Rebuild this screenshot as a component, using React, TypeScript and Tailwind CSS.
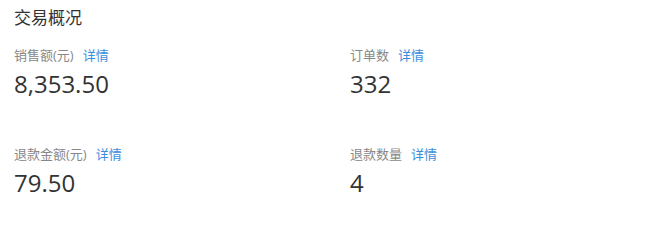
const stats = [
  { label: '销售额(元)', value: '8,353.50' },
  { label: '订单数', value: '332' },
  { label: '退款金额(元)', value: '79.50' },
  { label: '退款数量', value: '4' },
];

export default function App() {
  return (
    <div
      className="w-[650px] h-[231px] bg-white pl-[14px] pt-[7px] text-[#333]"
      style={{ fontFamily: '"Open Sans", "Noto Sans CJK SC", sans-serif' }}
    >
      <h2 className="text-[17px] leading-[22px] text-[#333]">交易概况</h2>
      <div className="grid grid-cols-[336px_1fr] gap-y-[45px] mt-[17px]">
        {stats.map((s) => (
          <div key={s.label}>
            <div className="flex items-center gap-[9px] text-[13px] leading-[18px]">
              <span className="text-[#888]">{s.label}</span>
              <a className="text-[#3c8ddb] cursor-pointer">详情</a>
            </div>
            <div className="text-[24px] leading-[32px] mt-[4px] text-[#333]">{s.value}</div>
          </div>
        ))}
      </div>
    </div>
  );
}
